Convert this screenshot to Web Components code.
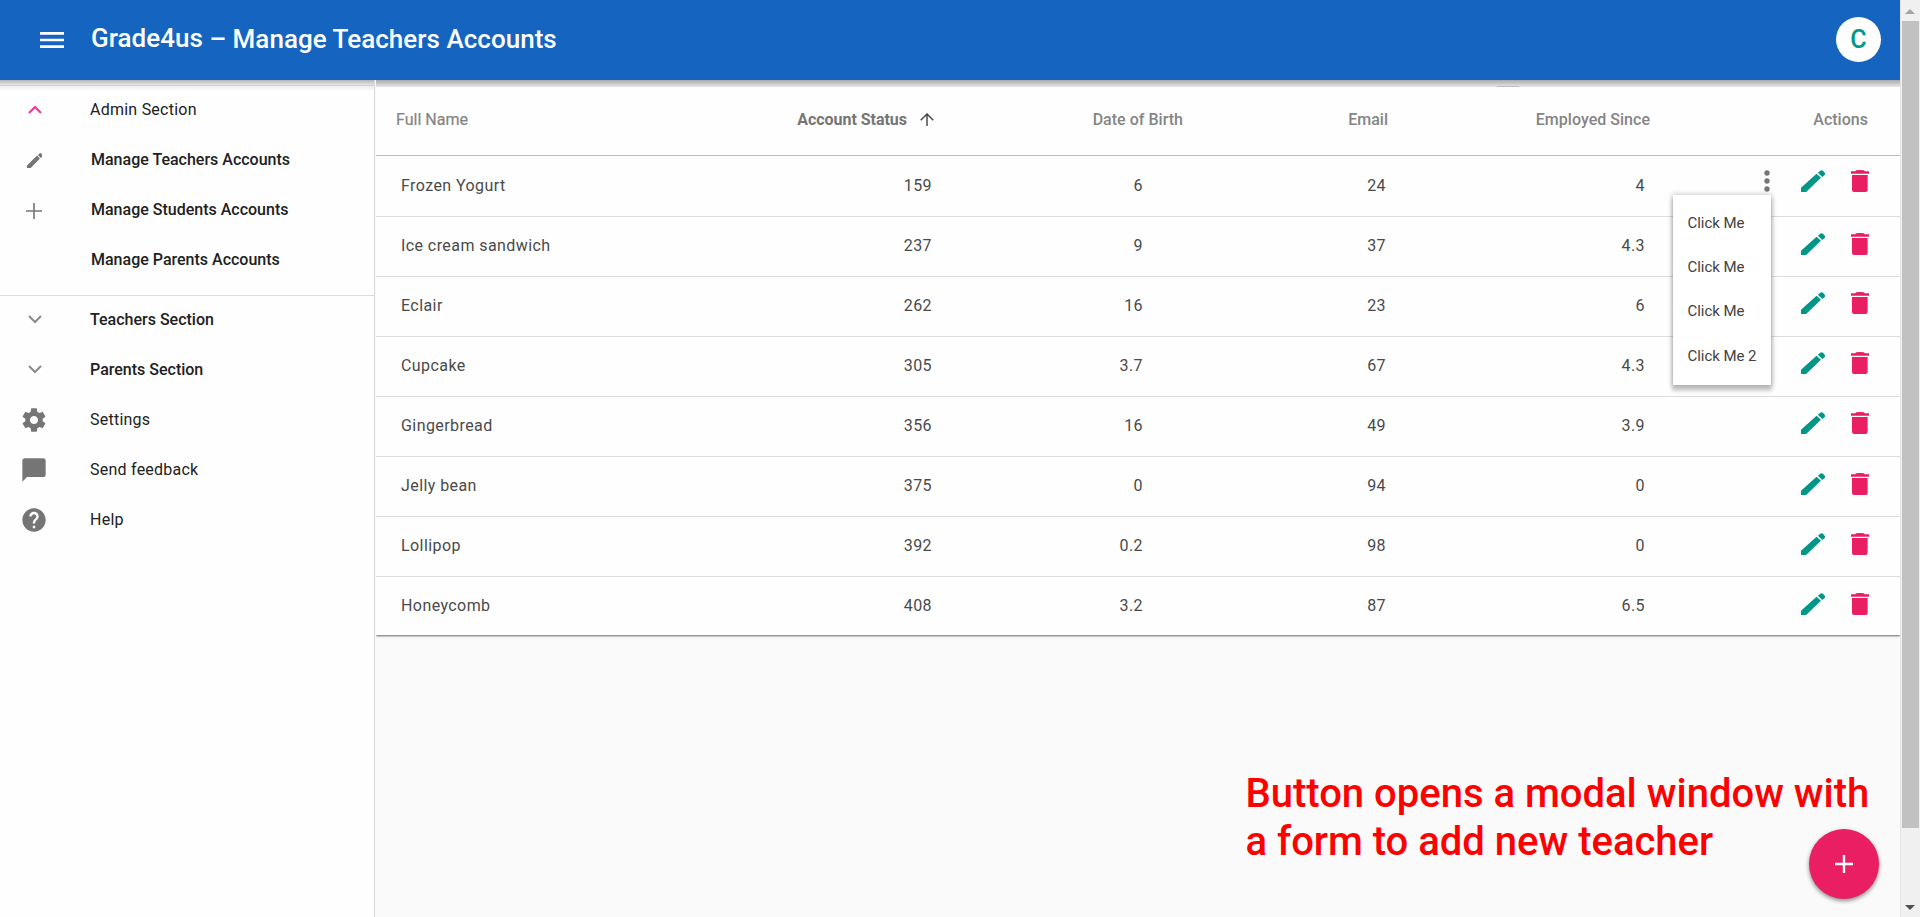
<!DOCTYPE html>
<html lang="en">
<head>
<meta charset="utf-8">
<title>Grade4us – Manage Teachers Accounts</title>
<style>
html,body{margin:0;height:100%;overflow:hidden;background:#fafafa;font-family:Roboto,"Liberation Sans",sans-serif;font-size:16px}
</style>
</head>
<body>
<script>
const ICONS = {
  menu: ['0 0 24 16', '<path d="M0 0h24v2.7H0zM0 6.650h24v2.700H0zM0 13.300h24V16H0z"/>'],
  up: ['0 0 14 9', '<path d="M1 8l6-6 6 6" fill="none" stroke="currentColor" stroke-width="2.2"/>'],
  down: ['0 0 14 9', '<path d="M1 1l6 6 6-6" fill="none" stroke="currentColor" stroke-width="2"/>'],
  pencil: ['0 0 71 66', '<path d="M0 66V53L46 11 59 23 15 66zM50 8l7-6q4-3 8 0l5 6q3 4 0 7l-7 6z"/>'],
  add: ['0 0 16 16', '<path d="M7.2 0h1.6v7.2H16v1.6H8.8V16H7.2V8.8H0V7.2h7.2z"/>'],
  fabadd: ['0 0 18 18', '<path d="M7.8 0h2.4v7.8H18v2.4h-7.8V18H7.8v-7.8H0V7.800h7.800z"/>'],
  gear: ['0 0 24 24', '<path d="M19.43 12.98c.04-.32.07-.64.07-.98s-.03-.66-.07-.98l2.110-1.650c.19-.15.24-.42.12-.64l-2-3.460c-.12-.22-.39-.3-.61-.22l-2.490 1c-.52-.4-1.080-.73-1.690-.98l-.38-2.650C14.460 2.180 14.250 2 14 2h-4c-.25 0-.46.18-.49.42l-.38 2.650c-.61.25-1.170.59-1.690.98l-2.490-1c-.23-.09-.49 0-.61.22l-2 3.460c-.13.22-.07.49.12.64l2.110 1.650c-.04.32-.07.65-.07.98s.03.66.07.98l-2.110 1.650c-.19.15-.24.42-.12.64l2 3.460c.12.22.39.3.61.22l2.490-1c.52.4 1.080.73 1.690.98l.38 2.650c.03.24.24.42.49.42h4c.25 0 .46-.18.49-.42l.38-2.650c.61-.25 1.170-.59 1.690-.98l2.490 1c.23.09.49 0 .61-.22l2-3.460c.12-.22.07-.49-.12-.64l-2.110-1.650zM12 15.500c-1.930 0-3.500-1.570-3.500-3.500s1.570-3.500 3.500-3.500 3.500 1.570 3.500 3.500-1.570 3.500-3.500 3.500z"/>'],
  chat: ['0 0 24 24', '<path d="M20 2H4c-1.100 0-1.990.9-1.990 2L2 22l4-4h14c1.100 0 2-.9 2-2V4c0-1.100-.9-2-2-2z"/>'],
  help: ['0 0 24 24', '<path d="M12 2C6.480 2 2 6.480 2 12s4.480 10 10 10 10-4.480 10-10S17.520 2 12 2zm1 17h-2v-2h2v2zm2.070-7.750l-.9.92C13.450 12.900 13 13.500 13 15h-2v-.5c0-1.100.45-2.100 1.170-2.830l1.240-1.260c.37-.36.59-.86.59-1.410 0-1.100-.9-2-2-2s-2 .9-2 2H8c0-2.210 1.790-4 4-4s4 1.790 4 4c0 .88-.36 1.680-.93 2.250z"/>'],
  trash: ['0 0 54 66', '<path d="M0 11V4h13l2-3q12-2 24 0l2 3h13v7zM3 15h47v44q0 7-6 7H9q-6 0-6-7z"/>'],
  dots: ['0 0 6 22', '<circle cx="3" cy="3" r="2.700"/><circle cx="3" cy="11" r="2.700"/><circle cx="3" cy="19" r="2.700"/>'],
  sort: ['0 0 14 13', '<path d="M.7 7.200L7 1l6.300 6.200M7 1.500V13" fill="none" stroke="currentColor" stroke-width="1.500"/>'],
  scrollup: ['0 0 10 5', '<path d="M0 5l5-5 5 5z"/>'],
  scrolldown: ['0 0 10 5', '<path d="M0 0h10L5 5z"/>']
};

class Base extends HTMLElement {
  connectedCallback() {
    if (this.shadowRoot) return;
    this.attachShadow({ mode: 'open' }).innerHTML = this.render();
  }
}
const define = (name, render) =>
  customElements.define(name, class extends Base { render() { return render(this); } });

define('g-icon', el => {
  const [box, body] = ICONS[el.getAttribute('name')];
  const w = el.getAttribute('w'), h = el.getAttribute('h') || w;
  return `<style>:host{display:block;flex:none;width:${w}px;height:${h}px}svg{display:block}</style>
  <svg width="${w}" height="${h}" viewBox="${box}" preserveAspectRatio="none" fill="currentColor" aria-hidden="true">${body}</svg>`;
});

define('g-topbar', () => `<style>
  :host{display:flex;align-items:center;height:80px;box-sizing:border-box;padding:0 19px 0 40px;background:#1565c0;color:#fff}
  h1{margin:0 auto 0 27px;display:flex;font:500 26px/30px Roboto,sans-serif;letter-spacing:.03px;white-space:pre;padding-bottom:2px}
  .brand{margin-top:-1px}
  .avatar{width:45px;height:45px;border-radius:50%;background:#fff;color:#009688;display:flex;align-items:center;justify-content:center;font:500 25px/45px Roboto,sans-serif;margin-bottom:1px}
  </style><g-icon name="menu" w="24" h="16"></g-icon>
  <h1><span class="brand">Grade4us </span><span>– Manage Teachers Accounts</span></h1>
  <div class="avatar">C</div>`);

define('g-nav-item', el => `<style>
  :host{display:flex;align-items:center;height:50px;color:#212121;font:${el.hasAttribute('medium') ? 500 : 400} 16px/50px Roboto,sans-serif;letter-spacing:${el.hasAttribute('medium') ? 0 : .24}px;white-space:nowrap}
  .ic{width:68px;padding-left:${el.hasAttribute('small') ? 1 : 0}px;box-sizing:border-box;margin-right:${el.hasAttribute('sub') ? 23 : 22}px;flex:none;display:flex;justify-content:center;color:${el.getAttribute('tint') || '#757575'}}
  </style><span class="ic"><slot name="icon"></slot></span><slot></slot>`);

define('g-sidebar', () => `<style>
  :host{display:block;width:375px;box-sizing:border-box;border-right:1px solid #d8d8d8;background:#fefefe}
  .shade{height:5px;background:linear-gradient(#b4b4b4,#e6e6e6)}
  .first{background:linear-gradient(#e9e9e9,#fefefe 6px);box-shadow:inset 0 1px #cfcfcf;padding-bottom:10px}
  .second{box-shadow:inset 0 1px #dcdcdc}
  g-icon[name=up],g-icon[name=down]{margin-bottom:2px}
  g-icon[name=down]{color:#8a8a8a}
  g-icon[name=pencil],g-icon[name=add]{margin-top:1px}
  </style><div class="shade"></div>
  <nav><div class="first">
  <g-nav-item small tint="#f0399a"><g-icon slot="icon" name="up" w="14" h="9"></g-icon>Admin Section</g-nav-item>
  <g-nav-item small medium sub><g-icon slot="icon" name="pencil" w="15.500"></g-icon>Manage Teachers Accounts</g-nav-item>
  <g-nav-item medium sub><g-icon slot="icon" name="add" w="16"></g-icon>Manage Students Accounts</g-nav-item>
  <g-nav-item medium sub>Manage Parents Accounts</g-nav-item>
  </div><div class="second">
  <g-nav-item small medium><g-icon slot="icon" name="down" w="14" h="9"></g-icon>Teachers Section</g-nav-item>
  <g-nav-item small medium><g-icon slot="icon" name="down" w="14" h="9"></g-icon>Parents Section</g-nav-item>
  <g-nav-item><g-icon slot="icon" name="gear" w="28"></g-icon>Settings</g-nav-item>
  <g-nav-item><g-icon slot="icon" name="chat" w="28"></g-icon>Send feedback</g-nav-item>
  <g-nav-item><g-icon slot="icon" name="help" w="28"></g-icon>Help</g-nav-item>
  </div></nav>`);

define('g-menu', () => `<style>
  :host{display:block;box-sizing:border-box;width:98px;height:190px;padding:6px 0 6px 14.500px;background:#fff;box-shadow:0 5px 4px 1px rgba(0,0,0,.2),0 0 5px 1px rgba(0,0,0,.2);font:15px/44px Roboto,sans-serif;letter-spacing:-.05px;color:#424242;white-space:nowrap}
  div{height:44.200px}
  </style><div>Click Me</div><div>Click Me</div><div>Click Me</div><div>Click Me 2</div>`);

const COLS = '558px 250px 205px 262px 1fr';

define('g-row', el => {
  const cells = el.getAttribute('cells').split('|');
  const first = el.hasAttribute('open');
  return `<style>
  :host{display:grid;grid-template-columns:${COLS};box-sizing:border-box;height:${first ? 61 : 60}px;padding-top:${first ? 1 : 0}px;border-bottom:1px solid #dcdcdc;font:16px/57px Roboto,sans-serif;letter-spacing:.42px;color:#4a4a4a}
  :host([last]){height:58px;border:0}
  .n{text-align:right}
  .name{display:flex;justify-content:space-between;padding:0 2px 0 25px}
  .dob{padding-right:41px}.mail{padding-right:3px}.emp{padding-right:6px}
  .act{position:relative;display:flex;justify-content:flex-end;align-items:flex-start;padding:${el.getAttribute('dy')}px 31px 0 0}
  .edit{color:#009688;margin-right:26px}.del{color:#e91e63}.more{color:#757575;margin-right:31.500px}
  g-menu{position:absolute;left:22px;top:38px;z-index:2}
  </style><div class="name"><span>${cells[0]}</span><span>${cells[1]}</span></div>
  <div class="n dob">${cells[2]}</div><div class="n mail">${cells[3]}</div><div class="n emp">${cells[4]}</div>
  <div class="act">${first ? '<g-icon class="more" name="dots" w="6" h="22"></g-icon><g-menu></g-menu>' : ''}
  <g-icon class="edit" name="pencil" w="24" h="22"></g-icon><g-icon class="del" name="trash" w="18" h="22"></g-icon></div>`;
});

define('g-table', () => `<style>
  :host{display:block;background:#fefefe;box-shadow:0 1px 2px rgba(0,0,0,.6);clip-path:inset(0 0 -6px 0)}
  .shade{height:7px;background:linear-gradient(#a9a9a9,#e8e8e8);display:flex;align-items:flex-end;padding-left:1121px}
  .shade i{width:22px;height:1px;background:#bdbdbd}
  .head{display:grid;grid-template-columns:${COLS};box-sizing:border-box;height:69px;border-bottom:1px solid #bdbdbd;font:500 16px/65px Roboto,sans-serif;letter-spacing:.02px;color:#858585;text-align:right}
  .head>div{padding-right:1px}
  .name{display:flex;align-items:center;padding-left:20px;font-weight:400;-webkit-text-stroke:.2px #808080;height:65px;box-sizing:border-box}
  b{margin-left:auto;margin-right:13px;letter-spacing:-.03px;font-weight:700;color:#757575;-webkit-text-stroke:0}
  .head>.name{padding-right:0}
  .name g-icon{color:#4a4a4a}
  .head>.act{padding-right:32px}
  </style><div class="shade"><i></i></div>
  <div class="head"><div class="name">Full Name<b>Account Status</b><g-icon name="sort" w="14" h="13"></g-icon></div>
  <div>Date of Birth</div><div>Email</div><div>Employed Since</div><div class="act">Actions</div></div>
  <g-row open dy="13" cells="Frozen Yogurt|159|6|24|4"></g-row>
  <g-row dy="16" cells="Ice cream sandwich|237|9|37|4.3"></g-row>
  <g-row dy="15" cells="Eclair|262|16|23|6"></g-row>
  <g-row dy="15" cells="Cupcake|305|3.7|67|4.3"></g-row>
  <g-row dy="15" cells="Gingerbread|356|16|49|3.9"></g-row>
  <g-row dy="16" cells="Jelly bean|375|0|94|0"></g-row>
  <g-row dy="16" cells="Lollipop|392|0.2|98|0"></g-row>
  <g-row last dy="16" cells="Honeycomb|408|3.2|87|6.5"></g-row>`);

define('g-note', () => `<style>
  :host{display:block;font:500 40px/48px Roboto,sans-serif;color:#f00;white-space:nowrap}
  </style><slot></slot>`);

define('g-fab', () => `<style>
  :host{display:flex;align-items:center;justify-content:center;width:70px;height:70px;border-radius:50%;background:#e91e63;color:#fff;box-shadow:0 2px 4px rgba(0,0,0,.45)}
  </style><g-icon name="fabadd" w="18"></g-icon>`);

define('g-scrollbar', () => `<style>
  :host{display:flex;flex-direction:column;align-items:center;box-sizing:border-box;width:20px;height:917px;background:#f0f0f0;padding:9px 1px 7px 0;border-left:1px solid #e4e4e4}
  .up{color:#a3a3a3;margin-bottom:7px}.down{color:#505050}
  .thumb{width:17px;height:807px;background:#c1c1c1;margin-bottom:auto}
  </style><g-icon class="up" name="scrollup" w="10" h="5"></g-icon><div class="thumb"></div><g-icon class="down" name="scrolldown" w="10" h="5"></g-icon>`);

define('g-app', () => `<style>
  :host{display:flex;width:1920px;height:917px;overflow:hidden}
  .page{width:1900px;display:flex;flex-direction:column}
  .body{flex:1;display:flex}
  main{position:relative;flex:1;display:flex;flex-direction:column;margin-left:1px}
  g-note{margin:135px 0 0 869.500px}
  g-fab{position:absolute;right:21px;bottom:18px}
  </style><div class="page"><g-topbar></g-topbar><div class="body"><g-sidebar></g-sidebar>
  <main><g-table></g-table><g-note>Button opens a modal window with<br>a form to add new teacher</g-note><g-fab></g-fab></main></div></div>
  <g-scrollbar></g-scrollbar>`);
</script>
<g-app></g-app>
</body>
</html>
